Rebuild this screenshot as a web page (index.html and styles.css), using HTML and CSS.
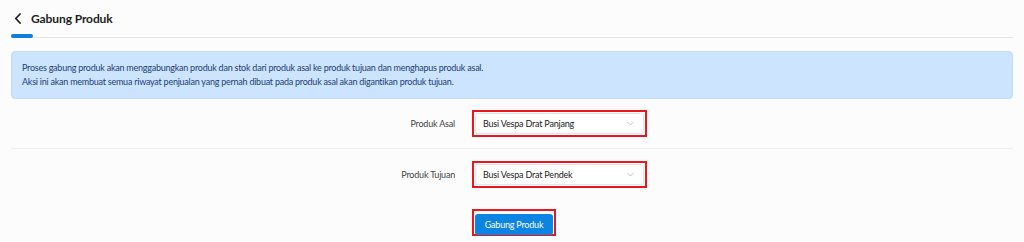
FILE: index.html
```html
<!DOCTYPE html>
<html lang="id">
<head>
<meta charset="utf-8">
<title>Gabung Produk</title>
<link rel="stylesheet" href="styles.css">
</head>
<body>
<div class="page">
  <div class="header">
    <svg class="back" width="8" height="11" viewBox="0 0 8 11"><path d="M6 1 L1.8 5.5 L6 10" fill="none" stroke="#222" stroke-width="1.8" stroke-linecap="round" stroke-linejoin="round"/></svg>
    <h1 class="title">Gabung Produk</h1>
  </div>
  <div class="tabline"><span class="tab-pill"></span></div>
  <div class="info">
    <p>Proses gabung produk akan menggabungkan produk dan stok dari produk asal ke produk tujuan dan menghapus produk asal.</p>
    <p>Aksi ini akan membuat semua riwayat penjualan yang pernah dibuat pada produk asal akan digantikan produk tujuan.</p>
  </div>
  <div class="form-row first">
    <label class="label">Produk Asal</label>
    <div class="hl">
      <div class="select"><span>Busi Vespa Drat Panjang</span><svg width="7" height="5" viewBox="0 0 7 5"><path d="M0.5 1 L3.5 4 L6.5 1" fill="none" stroke="#c4c4c4" stroke-width="1"/></svg></div>
    </div>
  </div>
  <div class="form-row second">
    <label class="label">Produk Tujuan</label>
    <div class="hl">
      <div class="select"><span>Busi Vespa Drat Pendek</span><svg width="7" height="5" viewBox="0 0 7 5"><path d="M0.5 1 L3.5 4 L6.5 1" fill="none" stroke="#c4c4c4" stroke-width="1"/></svg></div>
    </div>
  </div>
  <div class="form-row actions">
    <span></span>
    <div class="hl btn-hl"><button class="btn">Gabung Produk</button></div>
  </div>
</div>
</body>
</html>
```
FILE: styles.css
```css
* { box-sizing: border-box; }
html, body { margin: 0; padding: 0; background: #fcfcfc; }
body { font-family: "Lato", "Noto Sans", sans-serif; color: #333; width: 1024px; height: 242px; overflow: hidden; }
.page { padding: 0 11px; }
.header { height: 34px; display: flex; align-items: center; padding-left: 3px; padding-top: 2px; gap: 9px; }
.back { display: block; }
.title { margin: 0; font-size: 12px; letter-spacing: -0.1px; font-weight: 700; color: #222; }
.tabline { position: relative; height: 4px; }
.tabline::after { content: ""; position: absolute; left: 0; right: 0; top: 2.5px; height: 1px; background: #e6e6e6; }
.tab-pill { position: absolute; left: 0; top: 0; width: 22px; height: 4px; border-radius: 2px; background: #0b80e2; z-index: 1; }
.info { margin-top: 13px; background: #cce4fd; border: 1px solid #c4dcf8; border-radius: 4px; padding: 9px 10px; height: 48px; }
.info p { margin: 0; font-size: 9px; letter-spacing: -0.24px; line-height: 14px; color: #1d3e78; }
.form-row { display: grid; grid-template-columns: 444px 175px; column-gap: 17px; align-items: center; }
.form-row.first { padding: 11px 0; border-bottom: 1px solid #efefef; }
.form-row.second { padding: 12px 0 21px; }
.label { text-align: right; font-size: 9px; letter-spacing: -0.2px; color: #444; }
.hl { border: 2px solid #e8161e; padding: 1px; height: 27px; }
.select { height: 100%; background: #fff; border: 1px solid #e4e4e4; border-radius: 3px; display: flex; align-items: center; justify-content: space-between; padding: 0 9px 0 7px; font-size: 9px; letter-spacing: -0.2px; color: #222; }
.btn-hl { width: 84px; }
.btn { width: 100%; height: 100%; border: none; border-radius: 3px; background: #0b84e4; color: #fff; font-family: inherit; font-size: 9px; letter-spacing: -0.2px; padding: 0; }
```
